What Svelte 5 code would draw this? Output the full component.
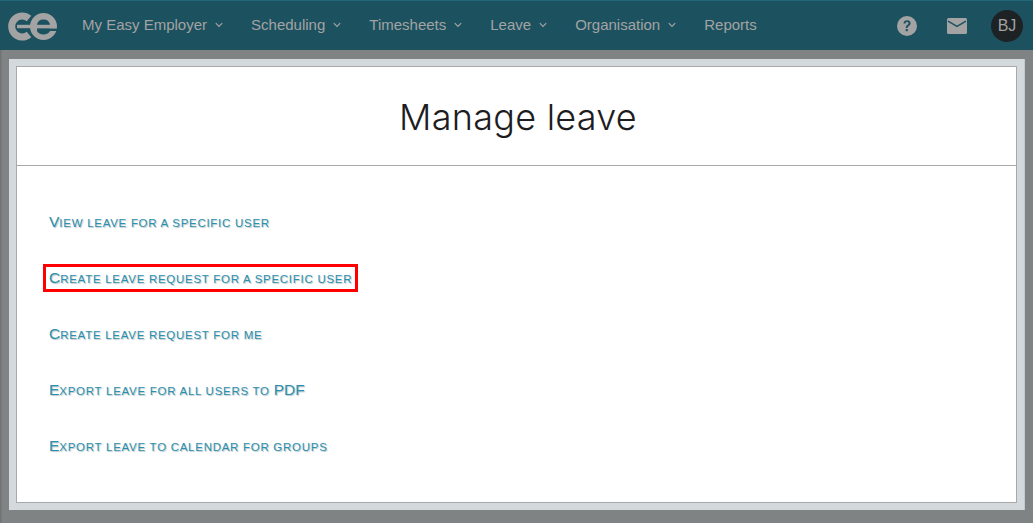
<script>
  const nav = [
    { label: 'My Easy Employer', caret: true },
    { label: 'Scheduling', caret: true },
    { label: 'Timesheets', caret: true },
    { label: 'Leave', caret: true },
    { label: 'Organisation', caret: true },
    { label: 'Reports', caret: false }
  ];
  const links = [
    { label: 'View leave for a specific user', marked: false },
    { label: 'Create leave request for a specific user', marked: true },
    { label: 'Create leave request for me', marked: false },
    { label: 'Export leave for all users to PDF', marked: false },
    { label: 'Export leave to calendar for groups', marked: false }
  ];
  const runs = (text) => text.match(/[A-Z]+|[^A-Z]+/g);
</script>

<div class="page">
  <header class="bar">
    <svg class="logo" width="50" height="30" viewBox="0 0 50 30" aria-label="Easy Employer logo">
      <path d="M21 6.500A10.500 10.500 0 1 0 21 22.500" fill="none" stroke="#a3a3a3" stroke-width="7"/>
      <rect x="9" y="12.800" width="16" height="3.400" fill="#a3a3a3"/>
      <circle cx="35.500" cy="14.500" r="10" fill="none" stroke="#a3a3a3" stroke-width="7"/>
      <path d="M29 12.800a6.600 6.300 0 0 1 13 0z" fill="#1c5260"/>
      <rect x="28.500" y="12.800" width="19" height="3.800" fill="#a3a3a3"/>
      <rect x="29" y="16.600" width="21" height="2.400" fill="#1c5260"/>
      <path d="M29 19h13c-1 2-3.500 3.500-6.500 3.500S30 21 29 19z" fill="#1c5260"/>
    </svg>
    <nav class="menu">
      {#each nav as item}
        <span class="item">
          {item.label}
          {#if item.caret}
            <svg class="caret" width="8" height="6" viewBox="0 0 8 6"><path d="M.8 1.200 4 4.400l3.200-3.200" fill="none" stroke="#a3a3a3" stroke-width="1.200"/></svg>
          {/if}
        </span>
      {/each}
    </nav>
    <div class="tools">
      <svg width="20" height="20" viewBox="0 0 20 20" aria-label="Help">
        <circle cx="10" cy="10" r="10" fill="#a3a3a3"/>
        <path d="M6.500 7.600c.1-2.100 1.500-3.300 3.600-3.300s3.500 1.200 3.500 2.900c0 1.300-.7 2-1.700 2.700-.9.600-1.200 1-1.200 2h-2c0-1.600.5-2.300 1.500-3 .8-.6 1.300-1 1.300-1.700 0-.8-.7-1.300-1.500-1.300-.9 0-1.500.6-1.600 1.700z" fill="#1c5260"/>
        <rect x="8.700" y="13" width="2.100" height="2.200" fill="#1c5260"/>
      </svg>
      <svg class="mail" width="20" height="16" viewBox="0 0 20 16" aria-label="Messages">
        <rect width="20" height="16" rx="1.500" fill="#a3a3a3"/>
        <path d="M1 3.200 10 8.500l9-5.300" fill="none" stroke="#1c5260" stroke-width="1.500"/>
      </svg>
      <span class="avatar">BJ</span>
    </div>
  </header>

  <main class="frame">
    <section class="card">
      <h1>Manage leave</h1>
      <ul>
        {#each links as link}
          <li>
            <a href="#top" class:marked={link.marked}>{#each runs(link.label) as run}<span class:sc={run !== run.toUpperCase()}>{run}</span>{/each}</a>
          </li>
        {/each}
      </ul>
    </section>
  </main>
</div>

<style>
  :global(body) {
    margin: 0;
    background: #7f8383;
  }
  .page {
    width: 1033px;
    height: 523px;
    overflow: hidden;
    font-family: "Liberation Sans", Arial, sans-serif;
    background: #7f8383;
    box-shadow: inset 2px 0 2px -1px #6b6f70;
  }
  .bar {
    box-sizing: border-box;
    height: 50px;
    display: flex;
    align-items: center;
    padding-left: 8px;
    background: #1c5260;
    border-top: 1px solid #226577;
  }
  .logo {
    flex: none;
    margin-top: 3px;
  }
  .menu {
    display: flex;
    gap: 28px;
    margin-left: 24px;
    margin-top: -2px;
  }
  .item {
    display: flex;
    align-items: center;
    gap: 8px;
    font-size: 15px;
    color: #a3a3a3;
    white-space: nowrap;
  }
  .caret {
    margin-top: 1px;
  }
  .tools {
    margin-left: auto;
    display: flex;
    align-items: center;
    margin-right: 10px;
  }
  .mail {
    margin-left: 30px;
  }
  .avatar {
    margin-left: 24px;
    width: 32px;
    height: 32px;
    border-radius: 50%;
    background: #1d2225;
    color: #a3a3a3;
    font-size: 16px;
    display: flex;
    align-items: center;
    justify-content: center;
  }
  .frame {
    box-sizing: border-box;
    margin: 9px 8px 0 9px;
    height: 451px;
    padding: 7px;
    background: #d3d9dc;
    border-right: 1px solid #c4cacc;
  }
  .card {
    box-sizing: border-box;
    height: 437px;
    width: 1001px;
    background: #fff;
    border: 1px solid #a9a9a9;
  }
  h1 {
    margin: 0;
    height: 99px;
    box-sizing: border-box;
    border-bottom: 1px solid #a9a9a9;
    padding-left: 3px;
    text-align: center;
    font-family: Inter, "Noto Sans", sans-serif;
    font-weight: 300;
    font-size: 36px;
    letter-spacing: 0.25px;
    line-height: 100px;
    color: #1d1d1f;
  }
  ul {
    list-style: none;
    margin: 0;
    padding: 40px 0 0 26px;
    display: flex;
    flex-direction: column;
    gap: 24px;
  }
  li {
    height: 32px;
    display: flex;
    align-items: center;
  }
  a {
    box-sizing: border-box;
    height: 28px;
    padding: 0 3px;
    display: inline-block;
    border: 3px solid transparent;
    font-size: 15.500px;
    line-height: 22px;
    text-transform: uppercase;
    color: #2b90ad;
    text-decoration: none;
    text-shadow: 1px 1px 1px #b9c4c8;
    white-space: nowrap;
  }
  .sc {
    font-size: 11.500px;
    letter-spacing: 0.72px;
  }
  a.marked {
    border-color: #f00;
  }
</style>
